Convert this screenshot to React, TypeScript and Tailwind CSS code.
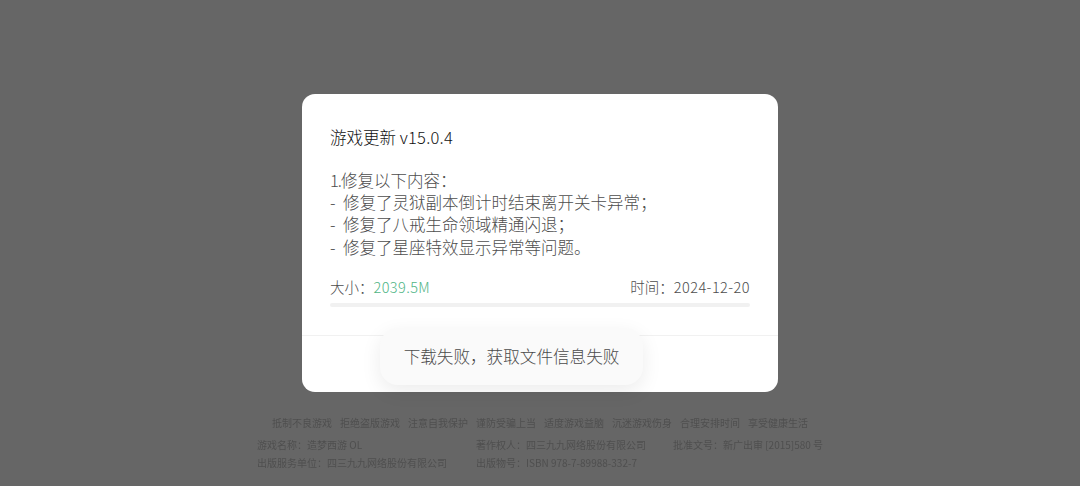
import React from 'react';

const font = { fontFamily: '"Noto Sans CJK SC", "Noto Sans", sans-serif' };

const slogans = ['抵制不良游戏', '拒绝盗版游戏', '注意自我保护', '谨防受骗上当', '适度游戏益脑', '沉迷游戏伤身', '合理安排时间', '享受健康生活'];

const fixes = ['修复了灵狱副本倒计时结束离开关卡异常；', '修复了八戒生命领域精通闪退；', '修复了星座特效显示异常等问题。'];

const App: React.FC = () => {
  return (
    <div className="relative h-[486px] w-[1080px] overflow-hidden bg-[#666666]" style={font}>
      {/* page behind the overlay */}
      <div className="flex h-full flex-col items-center justify-end pb-[14px] text-[10px] leading-[18px] text-[#4f4f4f] blur-[0.5px]">
        <div className="flex gap-[8px] pb-[4px]">
          {slogans.map((s) => (
            <span key={s}>{s}</span>
          ))}
        </div>
        <div className="grid grid-cols-[219px_197px_150px] whitespace-nowrap">
          <span>游戏名称：造梦西游 OL</span>
          <span>著作权人：四三九九网络股份有限公司</span>
          <span>批准文号：新广出审 [2015]580 号</span>
          <span>出版服务单位：四三九九网络股份有限公司</span>
          <span>出版物号：ISBN 978-7-89988-332-7</span>
        </div>
      </div>

      {/* dialog */}
      <div className="absolute inset-0 flex items-center justify-center">
        <div className="relative flex h-[298px] w-[476px] flex-col rounded-[13px] bg-white">
          <div className="flex-1 px-[28px] pt-[31px]">
            <h2 className="text-[16.5px] leading-[24px] font-light text-[#111111]">
              游戏更新 <span className="tracking-[0.25px]">v15.0.4</span>
            </h2>
            <div className="mt-[20px] text-[16.5px] leading-[22.2px] font-light text-[#4d4d4d]">
              <p>
                <span className="tracking-[-1px]">1.</span>修复以下内容：
              </p>
              {fixes.map((n) => (
                <p key={n}>
                  <span className="inline-block w-[13px]">-</span>
                  {n}
                </p>
              ))}
            </div>
            <div className="mt-[18px] flex justify-between text-[14.5px] leading-[22px] font-light text-[#4d4d4d]">
              <span>
                大小：<span className="tracking-[0.4px] text-[#4fb585]">2039.5M</span>
              </span>
              <span>
                时间：<span className="tracking-[0.45px]">2024-12-20</span>
              </span>
            </div>
            <div className="mt-[5px] h-[4px] rounded-full bg-[#f1f1f1]" />
          </div>
          <div className="h-[57px] border-t border-[#f1f1f1]" />

          {/* toast */}
          <div className="absolute top-[234px] left-[78px] flex h-[57px] w-[263px] items-center justify-center rounded-[18px] bg-[#fafafa] text-[16.6px] font-light text-[#4a4a4a] shadow-[0_6px_20px_rgba(0,0,0,0.08)]">
            下载失败，获取文件信息失败
          </div>
        </div>
      </div>
    </div>
  );
};

export default App;
